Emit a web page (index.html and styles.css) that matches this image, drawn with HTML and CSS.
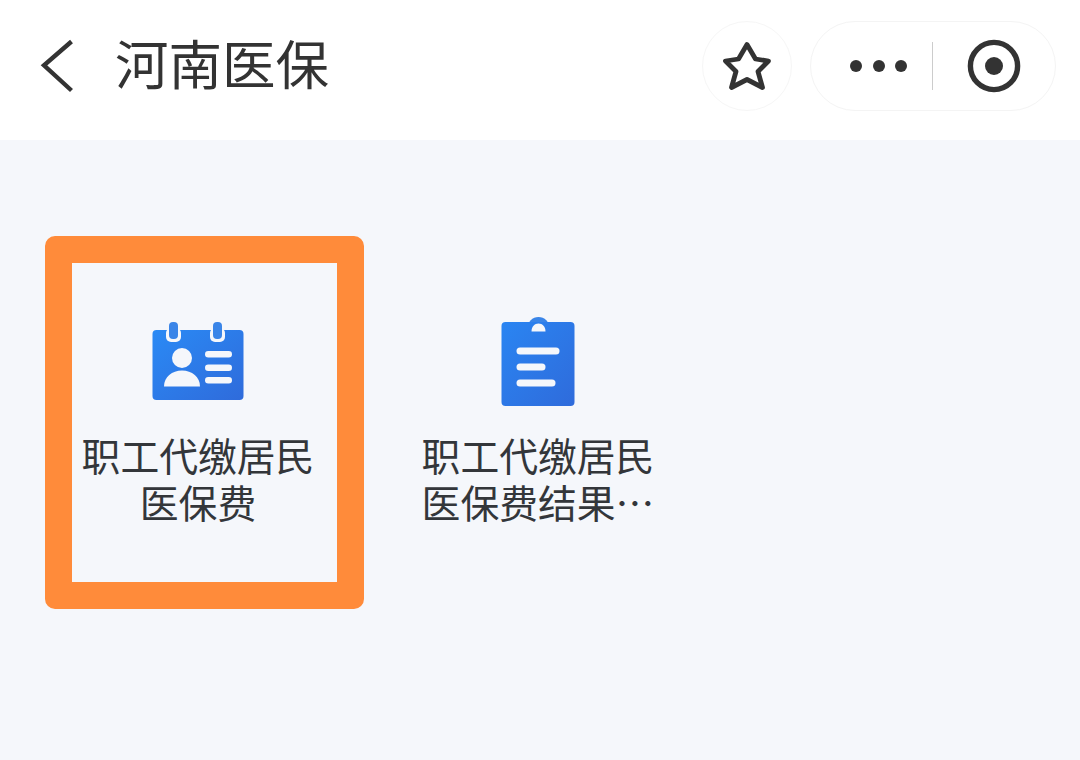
FILE: index.html
```html
<!DOCTYPE html>
<html lang="zh-CN">
<head>
<meta charset="utf-8">
<title>河南医保</title>
<link rel="stylesheet" href="styles.css">
</head>
<body>
<header class="navbar">
  <svg class="back" viewBox="0 0 36 56" aria-hidden="true"><path d="M31.500 3.500 4 27.300 31.500 52.500" fill="none" stroke="#333" stroke-width="4.400"/></svg>
  <h1 class="title">河南医保</h1>
  <div class="star-btn">
    <svg class="star" viewBox="0 0 52 52" aria-hidden="true"><path d="M26 4.500 34.500 19 47.500 21 37 31.500 41.500 47.500 26 39.500 10.500 47.500 15 31.500 4.500 21 17.500 19Z" fill="none" stroke="#333" stroke-width="4.800" stroke-linejoin="round"/></svg>
  </div>
  <div class="capsule">
    <div class="dots"><i class="dot"></i><i class="dot"></i><i class="dot"></i></div>
    <span class="divider"></span>
    <svg class="target" viewBox="0 0 54 54" aria-hidden="true"><circle cx="27" cy="27" r="23.600" fill="none" stroke="#333" stroke-width="5.400"/><circle cx="27" cy="27" r="9" fill="#333"/></svg>
  </div>
</header>
<main class="grid">
  <section class="tile">
    <div class="highlight"></div>
    <div class="icon-box">
      <svg class="icon" width="96" height="96" viewBox="0 0 96 96" aria-hidden="true">
        <defs><linearGradient id="blueA" x1="0" y1="0" x2="1" y2="1"><stop offset="0" stop-color="#2a8af5"/><stop offset="1" stop-color="#2f6bdb"/></linearGradient></defs>
        <rect x="2.500" y="16" width="91" height="70" rx="4" fill="url(#blueA)"/>
        <rect x="16" y="14" width="15" height="14" rx="5" fill="#f5f7fb"/>
        <rect x="60" y="14" width="15" height="14" rx="5" fill="#f5f7fb"/>
        <rect x="19" y="8" width="9" height="17" rx="4" fill="#3a85e8"/>
        <rect x="63" y="8" width="9" height="17" rx="4" fill="#3a85e8"/>
        <circle cx="32" cy="44" r="10" fill="#f5f7fb"/>
        <path d="M14 72.500C14 63 22 56.500 32 56.500S50 63 50 72.500Z" fill="#f5f7fb"/>
        <rect x="55" y="37" width="27" height="6.500" rx="3.250" fill="#f5f7fb"/>
        <rect x="55" y="50.500" width="27" height="6.500" rx="3.250" fill="#f5f7fb"/>
        <rect x="55" y="63" width="27" height="6.500" rx="3.250" fill="#f5f7fb"/>
      </svg>
    </div>
    <p class="label">职工代缴居民医保费</p>
  </section>
  <section class="tile">
    <div class="icon-box">
      <svg class="icon" width="96" height="96" viewBox="0 0 96 96" aria-hidden="true">
        <defs><linearGradient id="blueB" x1="0" y1="0" x2="1" y2="1"><stop offset="0" stop-color="#2a85f2"/><stop offset="1" stop-color="#2f6bdb"/></linearGradient></defs>
        <circle cx="48.500" cy="14" r="11" fill="#3a85e8"/>
        <rect x="11.500" y="8" width="73" height="84" rx="4" fill="url(#blueB)"/>
        <path d="M41.500 17.500C41.500 12.500 44.500 9.500 48.500 9.500S55.500 12.500 55.500 17.500Z" fill="#f5f7fb"/>
        <rect x="26.500" y="33.500" width="43" height="7" rx="3.500" fill="#f5f7fb"/>
        <rect x="26.500" y="49.500" width="29" height="7" rx="3.500" fill="#f5f7fb"/>
        <rect x="26.500" y="65.500" width="39" height="7" rx="3.500" fill="#f5f7fb"/>
      </svg>
    </div>
    <p class="label">职工代缴居民医保费结果…</p>
  </section>
</main>
</body>
</html>
```
FILE: styles.css
```css
* { box-sizing: border-box; }
html, body { margin: 0; height: 100%; }
body {
  background: #f5f7fb;
  color: #333;
  font-family: "Noto Sans CJK SC", "Noto Sans", sans-serif;
  overflow: hidden;
}
.navbar {
  height: 140px;
  background: #fff;
  display: flex;
  align-items: center;
  padding: 0 24px 8px 40px;
}
.back { width: 36px; height: 56px; flex: none; }
.title {
  margin: 0 0 8px 39px;
  font-size: 53.500px;
  font-weight: 400;
  line-height: 64px;
  color: #333;
  flex: 1;
}
.star-btn {
  width: 90px;
  height: 90px;
  margin-right: 18px;
  border: 1px solid #f6f6f6;
  border-radius: 50%;
  display: flex;
  align-items: center;
  justify-content: center;
}
.star { width: 52px; height: 52px; }
.capsule {
  width: 246px;
  height: 90px;
  border: 1px solid #f4f4f4;
  border-radius: 45px;
  display: flex;
  align-items: center;
  padding-left: 39px;
}
.dots { display: flex; gap: 10.500px; }
.dot { width: 12px; height: 12px; border-radius: 50%; background: #333; }
.divider { width: 1px; height: 48px; background: #ccc; margin: 0 34px 0 25px; }
.target { width: 54px; height: 54px; }
.grid {
  display: grid;
  grid-template-columns: 340px 340px;
  padding: 96px 0 0 28px;
}
.tile {
  position: relative;
  padding-top: 78px;
  display: flex;
  flex-direction: column;
  align-items: center;
}
.highlight {
  position: absolute;
  left: 17px;
  top: 0;
  width: 319px;
  height: 373px;
  border: 27px solid #ff8b3a;
  border-radius: 10px;
}
.icon-box { width: 96px; height: 96px; margin-bottom: 21px; }
.icon { display: block; }
.label {
  margin: 0;
  width: 238px;
  font-size: 38.800px;
  line-height: 47px;
  text-align: center;
  color: #33363a;
}
```
